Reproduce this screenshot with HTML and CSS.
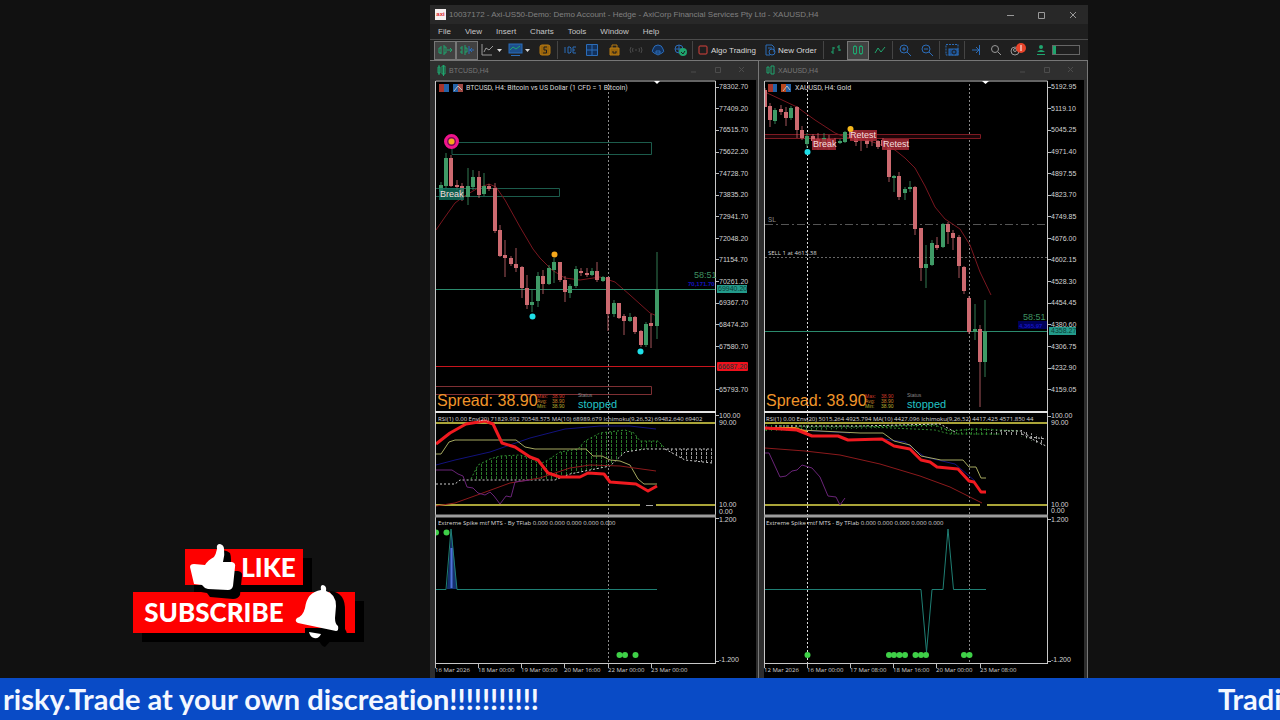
FILE: index.html
```html
<!DOCTYPE html>
<html lang="en">
<head>
<meta charset="utf-8">
<title>Live trading stream</title>
<link rel="stylesheet" href="styles.css">
</head>
<body>
<main class="stage">
  <aside class="promo">
    <button class="badge like" type="button">
      <svg class="thumb" width="52" height="56" viewBox="188 542 52 56" aria-hidden="true">
        <path class="shade" d="M199 574L206 571Q214 567 217 561L220 553Q224 548 230 553Q232 558 230 571H238Q243 572 242 576L240 595Q238 599 233 599L210 597L207 593L201 592Z"/>
        <path class="shape" d="M190 567Q190 564 194 564L205 565Q208 560 214 557Q216 554 217 549Q216 544 220 544Q224 545 224 549Q225 555 223 562L232 562Q236 563 235 567L233 586Q232 590 228 590L208 589Q204 588 202 585L194 584Z"/>
      </svg>
      <span>LIKE</span>
    </button>
    <button class="badge subscribe" type="button">
      <span>SUBSCRIBE</span>
      <svg class="bell" width="56" height="64" viewBox="290 584 56 64" aria-hidden="true">
        <path class="shade" d="M327 591Q343 592 342 612L342 629Q346 635 341 637L332 636L322 647Q318 646 316 640L302 634V628H330Z"/>
        <path class="shape" d="M318 590Q317 585 320 585Q324 586 323 591Q333 594 333 606L332 618Q332 624 335 626Q336 631 333 631L295 623Q291 621 294 618Q300 616 302 608Q304 592 318 590Z"/>
        <path class="shape" d="M306 632L318 634Q316 639 311 638Q307 637 306 632Z"/>
      </svg>
    </button>
  </aside>

  <section class="terminal">
    <header class="titlebar">
      <span class="logo">axi</span>
      <h1 class="title">10037172 - Axi-US50-Demo: Demo Account - Hedge - AxiCorp Financial Services Pty Ltd - XAUUSD,H4</h1>
      <button class="winbtn" type="button" aria-label="Minimize"><svg width="10" height="10"><path d="M1 5.5H8"/></svg></button>
      <button class="winbtn" type="button" aria-label="Maximize"><svg width="10" height="10"><path d="M1.500 2.500H7.500V8.500H1.500Z"/></svg></button>
      <button class="winbtn" type="button" aria-label="Close"><svg width="10" height="10"><path d="M2 2L8 8M8 2L2 8"/></svg></button>
    </header>
    <nav class="menubar">
      <button type="button">File</button><button type="button">View</button><button type="button">Insert</button><button type="button">Charts</button><button type="button">Tools</button><button type="button">Window</button><button type="button">Help</button>
    </nav>
    <div class="toolbar">
      <button class="tool on green" type="button" aria-label="Auto scroll"><svg width="16" height="14"><path d="M4 3V11M4 5H2V10H4M7 2V12M7 4H9V10H7M10 7H15M13 5L15 7L13 9"/></svg></button>
      <button class="tool on" type="button" aria-label="Chart shift"><svg width="16" height="14"><path class="g" d="M3 3V11M6 2V12M1 5H3M1 9H3M6 5H8V9H6"/><path class="b" d="M10 3V11M10 7H15M13 5L11 7L13 9"/></svg></button>
      <button class="tool drop grey" type="button" aria-label="Line studies"><svg width="24" height="14"><path d="M2 1V12H12M4 9L6 5L9 7L13 3"/><path class="caret" d="M17 6H22L19.500 9Z"/></svg></button>
      <button class="tool drop blue" type="button" aria-label="Templates"><svg width="24" height="14"><rect class="bf" x="1" y="1" width="13" height="9"/><path class="g" d="M2 7L5 4L8 6L12 3"/><path d="M3 12.500H12"/><path class="caret" d="M17 6H22L19.500 9Z"/></svg></button>
      <button class="tool amber" type="button" aria-label="Market"><svg width="16" height="14"><rect class="af" x="3" y="2" width="10" height="10" rx="2"/><path class="k" d="M10 4H7V7H9.500V10H6"/></svg></button>
      <i class="sep"></i>
      <button class="tool blue" type="button" aria-label="IDE"><svg width="16" height="14"><path d="M3 4V10M6 4V10H8L9 9V5L8 4ZM14 4H11V10H14M11 7H13"/></svg></button>
      <button class="tool blue" type="button" aria-label="Grid"><svg width="16" height="14"><path class="bg" d="M2.500 1.500H13.500V12.500H2.500ZM8 1V13M2 7H14"/></svg></button>
      <button class="tool amber" type="button" aria-label="Store"><svg width="16" height="14"><path class="af" d="M4 5H13V12H4Z"/><path d="M6 5V2H11V5"/><path class="k" d="M7 8V10H10V8"/></svg></button>
      <button class="tool dim" type="button" aria-label="Signals"><svg width="16" height="14"><path d="M3 4Q1 7 3 10M5 5Q4 7 5 9M13 4Q15 7 13 10M11 5Q12 7 11 9M7 7H9"/></svg></button>
      <button class="tool blue" type="button" aria-label="Cloud"><svg width="16" height="14"><path class="bg" d="M4 10Q1 9 3 6Q4 2 8 2Q12 2 13 6Q15 9 12 10L8 12Z"/><path d="M6 8H10V10H6Z"/></svg></button>
      <button class="tool" type="button" aria-label="Community"><svg width="16" height="14"><circle class="b" cx="7" cy="6" r="4"/><path class="b" d="M3 6H11M7 2V10"/><circle class="gf" cx="11" cy="9" r="4"/><path class="k" d="M9 9L11 11L13 8"/></svg></button>
      <i class="sep"></i>
      <button class="tool wide red" type="button"><svg width="12" height="14"><rect x="2" y="3" width="8" height="8" rx="1"/></svg>Algo Trading</button>
      <button class="tool wide blue" type="button"><svg width="12" height="14"><path d="M2 2H8L10 4V9M2 2V12H6M4 5H8"/><circle cx="8" cy="9" r="3"/></svg>New Order</button>
      <i class="sep"></i>
      <button class="tool green" type="button" aria-label="Bar chart"><svg width="16" height="14"><path d="M5 4V11M3 9H5M5 5H7M11 2V8M9 4H11M11 7H13"/></svg></button>
      <button class="tool on green" type="button" aria-label="Candlesticks"><svg width="16" height="14"><path d="M3.500 3.500H6.500V10.500H3.500ZM5 2V4M5 10V12M9.500 3.500H12.500V10.500H9.500ZM11 2V4M11 10V12"/></svg></button>
      <button class="tool green" type="button" aria-label="Line chart"><svg width="16" height="14"><path d="M3 10L6 5L9 9L13 4"/></svg></button>
      <i class="sep"></i>
      <button class="tool blue" type="button" aria-label="Zoom in"><svg width="16" height="14"><circle cx="7" cy="6" r="4"/><path d="M10 9L14 13M5 6H9M7 4V8"/></svg></button>
      <button class="tool blue" type="button" aria-label="Zoom out"><svg width="16" height="14"><circle cx="7" cy="6" r="4"/><path d="M10 9L14 13M5 6H9"/></svg></button>
      <i class="sep"></i>
      <button class="tool blue" type="button" aria-label="Screenshot"><svg width="16" height="14"><path class="dash" d="M2 1.500H14V12H2Z"/><rect class="bf" x="5" y="6" width="9" height="6"/><circle class="k" cx="10" cy="9" r="2"/></svg></button>
      <i class="sep"></i>
      <button class="tool slim blue" type="button" aria-label="Shift end"><svg width="12" height="14"><path d="M9.500 2V12M2 7H9M6 4L9 7L6 10"/></svg></button>
      <button class="tool slim grey" type="button" aria-label="Search"><svg width="12" height="14"><circle cx="5" cy="6" r="3.500"/><path d="M8 9L11 12"/></svg></button>
      <button class="tool bell-tool grey" type="button" aria-label="Notifications"><svg width="18" height="14"><circle cx="6" cy="8" r="4"/><circle cx="6" cy="7" r="1.500"/><circle class="alert" cx="12" cy="5" r="5"/><path class="w" d="M12 2V8"/></svg></button>
      <button class="tool green" type="button" aria-label="Account"><svg width="14" height="14"><circle class="gf" cx="7" cy="4" r="2"/><path class="gf" d="M3 9Q7 5 11 9Z"/><path d="M3 11.500H11"/></svg></button>
      <span class="meter"><i></i></span>
    </div>

    <div class="charts">
      <article class="pane">
        <header class="panehead">
          <svg class="mini" width="10" height="12"><path d="M2 3H4V9H2ZM6 2H9V10H6ZM3 1V11M7.500 1V12"/></svg>
          <h2>BTCUSD,H4</h2>
          <button type="button" aria-label="Minimize chart"><svg width="8" height="8"><path d="M1 6H6"/></svg></button>
          <button type="button" aria-label="Maximize chart"><svg width="8" height="8"><path d="M1.500 1.500H6.500V6.500H1.500Z"/></svg></button>
          <button type="button" aria-label="Close chart"><svg width="8" height="8"><path d="M1 1L6 6M6 1L1 6"/></svg></button>
        </header>
        <svg class="plot" viewBox="430 79 329 599" role="img" aria-label="BTCUSD chart">
          <defs>
            <pattern id="mesh" width="5" height="4" patternUnits="userSpaceOnUse"><path d="M1.500 0V3" stroke="#2a7a2a"/></pattern>
            <pattern id="pale" width="5" height="4" patternUnits="userSpaceOnUse"><path d="M1.500 0V3" stroke="#999"/></pattern>
            <clipPath id="pl"><rect x="436" y="82" width="279" height="581"/></clipPath>
          </defs>
          <rect x="435" y="80" width="321" height="598" fill="#000"/>
          <path class="frame" d="M435.500 663V81H715.500V663M435 663.500H716"/>
          <path class="grip" d="M654 81H660L657 84Z"/>
          <path class="vgrid" d="M608.500 84V663"/>
          <g clip-path="url(#pl)">
            <path class="zone teal" d="M452 142.500H651.500V154.500H452ZM430 188.500H559.500V196.500H430Z"/>
            <path class="zone rose" d="M430 386.500H651.500V394.500H430Z"/>
            <path class="ma" d="M436 230L445 217L455 203L463 197L478 188L489 184L496 187L505 200L520 227L533 249L540 258L552 270L565 278L580 280L600 277L615 282L630 295L650 313L657 316"/>
            <path class="priceline" d="M436 289.500H715"/>
            <path class="stopline" d="M436 366.500H715"/>
            <path class="wick up" d="M441 182V192M446 153V188M468 168V205M473 170V190M484 173V196M532 289V312M538 272V307M549 265V285M554 258V283M570 284V298M576 266V288M592 268V276M603 276V282M614 300V317M630 313V322M646 322V347M657 252V339"/>
            <path class="body up" d="M441 185V192M446 158V186M468 186V197M473 177V187M484 186V194M532 302V305M538 276V301M549 268V284M554 262V270M570 286V293M576 269V286M592 271V275M603 277V281M614 303V314M630 317V321M646 324V345M657 289V326"/>
            <path class="wick down" d="M451 155V187M457 180V190M462 183V201M479 171V198M489 184V191M495 183V233M500 225V257M505 240V277M511 256V266M516 248V272M522 266V298M527 275V309M543 270V294M560 262V282M565 276V302M581 268V276M587 268V277M597 262V282M608 277V331M619 303V319M624 314V335M635 316V334M641 330V347M651 314V348"/>
            <path class="body down" d="M451 158V186M457 185V187M462 186V198M479 177V195M489 186V189M495 188V231M500 230V256M505 255V258M511 258V264M516 264V268M522 267V288M527 288V305M543 276V284M560 262V280M565 280V292M581 271V273M587 273V275M597 271V280M608 277V314M619 303V318M624 316V321M635 317V332M641 331V345M651 323V326"/>
          </g>
          <rect x="439" y="188" width="25" height="12" fill="#12745f" opacity=".8"/>
          <text class="tag" x="440" y="197">Break</text>
          <circle cx="451.500" cy="141.500" r="6" fill="#7a0a5a" stroke="#f0148c" stroke-width="3"/>
          <circle cx="451.500" cy="141.500" r="3" fill="#f5a81c"/>
          <circle cx="554.500" cy="254.500" r="3" fill="#f5a81c"/>
          <g fill="#1fe0e8"><circle cx="532.500" cy="316.500" r="3"/><circle cx="640.500" cy="351.500" r="3"/></g>
          <g><rect x="439" y="84" width="5" height="8" fill="#a8352b"/><rect x="444" y="84" width="5" height="8" fill="#2463a8"/><rect x="453" y="84" width="5" height="8" fill="#2463a8"/><rect x="458" y="84" width="5" height="8" fill="#a14a45"/><path d="M454 91L458 86L462 90" stroke="#bbb" fill="none"/></g>
          <text class="label" x="466" y="90">BTCUSD, H4: Bitcoin vs US Dollar (1 CFD = 1 Bitcoin)</text>
          <text class="timer" x="694" y="278">58:51</text>
          <text class="ask" x="688" y="286">70,171.70</text>
          <path class="tick" d="M716 87.500h3m-3 21h3m-3 22h3m-3 22h3m-3 21h3m-3 22h3m-3 21h3m-3 22h3m-3 21h3m-3 22h3m-3 22h3m-3 21h3m-3 22h3m-3 43h3m-3 26h3m-3 103h3m-3 143h3"/>
          <g class="axis">
            <text x="719" y="89">78302.70</text><text x="719" y="111">77409.20</text><text x="719" y="132">76515.70</text><text x="719" y="154">75622.20</text><text x="719" y="176">74728.70</text><text x="719" y="197">73835.20</text><text x="719" y="219">72941.70</text><text x="719" y="241">72048.20</text><text x="719" y="262">71154.70</text><text x="719" y="284">70261.20</text><text x="719" y="305">69367.70</text><text x="719" y="327">68474.20</text><text x="719" y="349">67580.70</text><text x="719" y="392">65793.70</text>
            <text x="719" y="418">100.00</text><text x="719" y="425">90.00</text><text x="719" y="507">10.00</text><text x="719" y="514">0.00</text><text x="719" y="522">1.200</text><text x="719" y="662">-1.200</text>
          </g>
          <rect x="717" y="285" width="30" height="8" fill="#239b8b"/><text class="axis dark" x="718" y="291">69940.20</text>
          <rect x="717" y="362" width="31" height="9" rx="1" fill="#f0101c"/><text class="axis dark" x="718" y="369">66687.20</text>
          <text class="spread" x="437" y="406">Spread: 38.90</text>
          <g class="stat"><text class="r" x="537" y="398">Max:</text><text class="r" x="552" y="398">38.90</text><text class="o" x="537" y="403">Avg:</text><text class="o" x="552" y="403">38.90</text><text class="y" x="537" y="408">Min:</text><text class="y" x="552" y="408">38.90</text><text x="578" y="397">Status</text></g>
          <text class="stopped" x="578" y="408">stopped</text>
          <path class="split" d="M435 412H716"/>
          <g clip-path="url(#pl)">
            <path class="level" d="M436 423H715M436 505H640M656 505H715"/>
            <path d="M646 505.500H653" stroke="#aaa"/>
            <path d="M471 479L478 465L490 459L500 456L520 455L530 458L540 464L548 460L560 452L578 449L585 441L600 433L625 430L634 433L640 441L658 441L665 448L645 449L625 452L610 466L590 470L570 474L555 480L471 480Z" fill="url(#mesh)"/>
            <path class="cloud" d="M471 479L478 465L490 459L500 456L520 455L530 458L540 464L548 460L560 452L578 449L585 441L600 433L625 430L634 433L640 441L658 441L665 448"/>
            <path class="cloud pale" d="M436 484H455L460 480H555L570 474L590 470L610 466L625 452L645 449H712M665 449L685 460L712 463"/>
            <path d="M665 449H712V463L685 460Z" fill="url(#pale)"/>
            <path class="navy" d="M436 465L455 460L490 452L530 438L565 429L600 426L630 426L656 429"/>
            <path class="kijun" d="M436 454H441L449 442L455 440H516L525 447L535 449H586L593 456H602L610 460L620 461L630 465L638 479L644 484H657"/>
            <path class="crimson" d="M436 506L455 503L480 494L510 483L540 478L570 468L590 465L620 466L656 471"/>
            <path class="violet" d="M436 470H452L458 474L463 476L467 487L473 488L478 493L485 495L490 492L494 496L500 504L506 496L511 497L515 482L530 480"/>
            <path class="rsi" d="M436 444L450 433L466 424L485 421L493 424L502 443L515 447L530 457L538 460L548 473L560 477L580 477L588 473L604 474L610 482L636 484L648 491L657 486"/>
            <text class="label small" x="438" y="421">RSI(1) 0.00 Env(20) 71829.982 70548.575 MA(10) 68989.679 Ichimoku(9,26,52) 69482.640 69402</text>
          </g>
          <path class="split thick" d="M435 516H716"/>
          <text class="label small" x="438" y="525">Extreme Spike mtf MTS - By TFlab 0.000 0.000 0.000 0.000 0.000</text>
          <path d="M451.500 529L447 589H457Z" fill="#14306e"/>
          <path class="spike" d="M436 589.500H446L451 529L457 589.500H657"/>
          <path d="M451.500 548V588" stroke="#4f72d8" stroke-width="2"/>
          <g class="dots"><path d="M436 529.500A3 3 0 0 1 436 535.500Z"/><circle cx="446.500" cy="532.500" r="3"/><circle cx="619.500" cy="655" r="3"/><circle cx="625" cy="655" r="3"/><circle cx="635.500" cy="655" r="3"/></g>
          <path class="tick" d="M435.500 664v4m43-4v4m43-4v4m43-4v4m44-4v4m43-4v4"/>
          <g class="axis dates"><text x="435" y="672">16 Mar 2026</text><text x="478" y="672">18 Mar 00:00</text><text x="521" y="672">19 Mar 00:00</text><text x="564" y="672">20 Mar 16:00</text><text x="608" y="672">22 Mar 00:00</text><text x="651" y="672">23 Mar 00:00</text></g>
        </svg>
      </article>

      <article class="pane">
        <header class="panehead">
          <svg class="mini" width="10" height="12"><path d="M2 3H4V9H2ZM6 2H9V10H6Z"/></svg>
          <h2>XAUUSD,H4</h2>
          <button type="button" aria-label="Minimize chart"><svg width="8" height="8"><path d="M1 6H6"/></svg></button>
          <button type="button" aria-label="Maximize chart"><svg width="8" height="8"><path d="M1.500 1.500H6.500V6.500H1.500Z"/></svg></button>
          <button type="button" aria-label="Close chart"><svg width="8" height="8"><path d="M1 1L6 6M6 1L1 6"/></svg></button>
        </header>
        <svg class="plot" viewBox="759 79 329 599" role="img" aria-label="XAUUSD chart">
          <defs><clipPath id="pr"><rect x="765" y="82" width="282" height="581"/></clipPath></defs>
          <rect x="764" y="80" width="320" height="598" fill="#000"/>
          <path class="frame" d="M764.500 663V81H1047.500V663M764 663.500H1048"/>
          <path class="grip" d="M982 81H989L985.500 84Z"/>
          <path class="vgrid" d="M969.500 84V663"/>
          <path class="vgrid bright" d="M807.500 82V663"/>
          <g clip-path="url(#pr)">
            <path class="zone crims" d="M760 134.500H980.500V138.500H760Z"/>
            <path class="hdash" d="M765 224.500H1047"/>
            <path class="hdot" d="M765 257.500H1047"/>
            <path class="ma" d="M765 92L780 99L797 107L815 120L835 133L845 137L870 141L895 150L905 158L915 168L925 186L935 207L945 219L960 229L970 245L980 272L991 295"/>
            <path class="priceline" d="M765 331.500H1047"/>
            <path class="wick up" d="M775 108V124M791 106V120M807 133V148M824 133V149M840 139V144M845 131V143M894 175V192M905 187V200M910 181V192M926 245V288M932 240V266M943 223V248M975 304V340M985 300V377"/>
            <path class="body up" d="M775 110V121M791 108V118M807 136V144M824 138V145M840 141V143M845 132V142M894 176V178M905 189V193M910 187V189M926 264V268M932 243V265M943 224V247M975 329V332M985 331V362"/>
            <path class="wick down" d="M765 88V107M770 103V127M781 105V115M786 107V126M797 106V138M802 126V140M813 134V146M818 133V150M829 135V150M835 138V147M851 128V140M856 130V146M861 138V151M867 138V148M872 139V146M878 140V149M883 138V149M889 145V182M899 172V200M915 186V235M921 228V281M937 237V250M948 222V244M953 230V250M959 235V278M964 266V294M969 296V334M980 325V407"/>
            <path class="body down" d="M765 90V107M770 106V120M781 109V112M786 112V118M797 107V130M802 130V138M813 136V141M818 139V144M829 139V146M851 130V138M856 136V142M867 140V144M878 141V147M883 140V146M889 148V177M899 176V197M915 187V229M921 228V268M937 245V248M948 224V232M953 233V238M959 237V266M964 267V291M969 298V332M980 329V362"/>
          </g>
          <g fill="#a82a36" opacity=".85"><rect x="812" y="139" width="24" height="11"/><rect x="850" y="130" width="27" height="11"/><rect x="882" y="139" width="27" height="11"/></g>
          <text class="tag" x="813" y="147">Break</text><text class="tag" x="850" y="138">Retest</text><text class="tag" x="883" y="147">Retest</text>
          <circle cx="850.500" cy="129" r="3" fill="#f5b81c"/>
          <circle cx="807.500" cy="152" r="3" fill="#1fe0e8"/>
          <rect x="768" y="84" width="5" height="8" fill="#a8352b"/><rect x="773" y="84" width="4" height="8" fill="#2463a8"/><rect x="781" y="84" width="5" height="8" fill="#b8481f"/><rect x="786" y="84" width="5" height="8" fill="#2463a8"/><path d="M783 91L787 86L790 90" stroke="#bbb" fill="none"/>
          <text class="label" x="795" y="90">XAUUSD, H4: Gold</text>
          <text class="label dim" x="768" y="222">SL</text>
          <text class="label small" x="768" y="255">SELL 1 at 4613.38</text>
          <text class="timer" x="1023" y="320">58:51</text>
          <rect x="1018" y="321" width="29" height="8" fill="#000058"/><text class="ask" x="1019" y="328">4,365.97</text>
          <path class="tick" d="M1048 87.500h3m-3 21h3m-3 22h3m-3 22h3m-3 21h3m-3 22h3m-3 21h3m-3 22h3m-3 21h3m-3 22h3m-3 22h3m-3 21h3m-3 22h3m-3 22h3m-3 21h3m-3 27h3m-3 103h3m-3 142h3"/>
          <g class="axis">
            <text x="1051" y="89">5192.95</text><text x="1051" y="111">5119.10</text><text x="1051" y="132">5045.25</text><text x="1051" y="154">4971.40</text><text x="1051" y="176">4897.55</text><text x="1051" y="197">4823.70</text><text x="1051" y="219">4749.85</text><text x="1051" y="241">4676.00</text><text x="1051" y="262">4602.15</text><text x="1051" y="284">4528.30</text><text x="1051" y="305">4454.45</text><text x="1051" y="327">4380.60</text><text x="1051" y="349">4306.75</text><text x="1051" y="370">4232.90</text><text x="1051" y="392">4159.05</text>
            <text x="1051" y="418">100.00</text><text x="1051" y="425">90.00</text><text x="1051" y="507">10.00</text><text x="1051" y="513">0.00</text><text x="1051" y="522">1.200</text><text x="1051" y="662">-1.200</text>
          </g>
          <rect x="1049" y="327" width="27" height="8" fill="#239b8b"/><text class="axis dark" x="1051" y="333">4358.27</text>
          <text class="spread" x="766" y="406">Spread: 38.90</text>
          <g class="stat"><text class="r" x="865" y="398">Max:</text><text class="r" x="881" y="398">38.90</text><text class="o" x="865" y="403">Avg:</text><text class="o" x="881" y="403">38.90</text><text class="y" x="865" y="408">Min:</text><text class="y" x="881" y="408">38.90</text><text x="907" y="397">Status</text></g>
          <text class="stopped" x="907" y="408">stopped</text>
          <path class="split" d="M764 412H1048"/>
          <g clip-path="url(#pr)">
            <path class="level" d="M765 423H1047M765 505H980M987 505H1047"/>
            <path d="M765 425H935L950 430L975 428L1020 430L1030 436L1046 440V446L1020 436L950 434L935 427L765 431Z" fill="url(#mesh)"/>
            <path d="M990 430H1022L1046 438V447L1022 436L990 434Z" fill="url(#pale)"/>
            <path class="cloud" d="M765 430L800 427L860 427L935 425L950 431L975 429L1020 431M870 427L935 430L950 434L1000 434"/>
            <path class="cloud pale" d="M775 426L860 426L940 424L955 432M1000 431H1022L1030 437L1046 439M1022 434L1046 446"/>
            <path class="navy" d="M765 427L815 431L850 433M884 439L905 442L915 450L925 457L955 464L975 481"/>
            <path class="kijun" d="M765 428L800 430L860 433H883L894 441L910 445L921 456L941 460H963L969 467H976L981 478H986"/>
            <path class="crimson" d="M765 448L805 451L840 455L880 464L920 476L950 487L982 503"/>
            <path class="violet" d="M765 453H769L780 477L786 476L792 471L797 470L802 465L812 468L820 477L828 496L836 497L840 505L845 498"/>
            <path class="orange" d="M765 428H795L807 432"/>
            <path class="rsi" d="M765 428L797 430L812 436L838 436L848 440L882 439L894 446L910 449L921 460L930 462L937 467L958 469L969 481L974 482L981 492L986 492"/>
            <text class="label small" x="766" y="421">RSI(1) 0.00 Env(20) 5015.264 4925.794 MA(10) 4427.096 Ichimoku(9,26,52) 4417.425 4571.850 44</text>
          </g>
          <path class="split thick" d="M764 516H1048"/>
          <text class="label small" x="766" y="525">Extreme Spike mtf MTS - By TFlab 0.000 0.000 0.000 0.000 0.000</text>
          <path class="spike" d="M765 589.500H921L926.500 652L932 589.500H943L948 529L953.500 589.500H986"/>
          <g class="dots"><circle cx="807.500" cy="655" r="3"/><circle cx="889" cy="655" r="3"/><circle cx="894" cy="655" r="3"/><circle cx="899.500" cy="655" r="3"/><circle cx="905" cy="655" r="3"/><circle cx="915.500" cy="655" r="3"/><circle cx="921" cy="655" r="3"/><circle cx="926" cy="655" r="3"/><circle cx="964" cy="655" r="3"/><circle cx="969.500" cy="655" r="3"/></g>
          <path class="tick" d="M764.500 664v4m43-4v4m43-4v4m43-4v4m43-4v4m44-4v4"/>
          <g class="axis dates"><text x="764" y="672">12 Mar 2026</text><text x="807" y="672">16 Mar 00:00</text><text x="850" y="672">17 Mar 08:00</text><text x="893" y="672">18 Mar 16:00</text><text x="936" y="672">20 Mar 00:00</text><text x="980" y="672">23 Mar 08:00</text></g>
        </svg>
      </article>
    </div>
  </section>
</main>
<footer class="ticker"><p>risky.Trade at your own discreation!!!!!!!!!!!</p><p class="next">Trading</p></footer>
</body>
</html>
```
FILE: styles.css
```css
* { box-sizing: border-box; }
body {
  margin: 0;
  min-height: 100vh;
  display: flex;
  flex-direction: column;
  background: #111;
  color: #ccc;
  font-family: "Liberation Sans", Arial, sans-serif;
  overflow-x: hidden;
}
h1, h2, p { margin: 0; font-weight: 400; }
button { border: 0; padding: 0; background: none; color: inherit; font: inherit; }
svg { display: block; }

.stage {
  flex: 1;
  display: grid;
  grid-template-columns: 430fr 658fr 192fr;
  padding-top: 5px;
}

/* call-to-action badges */
.promo {
  display: flex;
  flex-direction: column;
  align-items: flex-start;
  justify-content: flex-end;
  gap: 7px;
  padding: 0 0 45px 31%;
}
.badge {
  position: relative;
  display: flex;
  align-items: center;
  background: #fe0000;
  color: #fff;
  font-family: Lato, sans-serif;
  font-weight: 900;
  box-shadow: 9px 9px 0 #000;
}
.like { height: 36px; margin-left: 52px; padding: 0 7px 0 56px; font-size: 26px; }
.subscribe { height: 41px; padding: 0 71px 2px 11px; font-size: 26px; }
.thumb { position: absolute; left: 3px; top: -7px; z-index: 1; overflow: visible; }
.bell { position: absolute; right: 6px; top: -8px; }
.shade { fill: #000; }
.shape { fill: #fff; }

/* terminal window */
.terminal {
  display: flex;
  flex-direction: column;
  min-width: 0;
  background: #1f1f1f;
}
.titlebar { display: flex; align-items: center; height: 19px; padding: 0 0 0 5px; background: #282828; }
.logo { width: 11px; height: 11px; background: #f6f0f0; color: #d8232a; font-size: 6px; line-height: 10px; text-align: center; font-weight: 700; }
.title { flex: 1; margin-left: 3px; font-size: 8px; color: #808080; white-space: nowrap; }
.winbtn { display: flex; width: 31px; justify-content: center; }
.winbtn svg { fill: none; stroke: #999; }
.menubar { display: flex; align-items: center; gap: 14px; height: 15px; padding-left: 8px; font-size: 8px; color: #c6c6c6; }
.toolbar { display: flex; align-items: center; height: 22px; padding-left: 4px; border-top: 1px solid #4c4c4c; border-bottom: 1px solid #777; font-size: 8px; color: #d8d8d8; }
.tool { display: flex; flex: 0 0 22px; align-items: center; justify-content: center; height: 19px; }
.tool svg { fill: none; stroke: currentColor; flex: none; }
.on { background: #414141; border: 1px solid #777; }
.drop { flex-basis: 28px; }
.slim { flex-basis: 20px; }
.bell-tool { flex-basis: 24px; }
.wide { flex: 0 0 auto; padding: 0 5px 0 3px; gap: 2px; white-space: nowrap; }
.red svg { stroke: #d8433c; }
.green { color: #1fa56e; }
.blue svg { stroke: #2b6cb8; }
.amber { color: #b87a10; }
.grey { color: #999; }
.dim { color: #4a4a4a; }
.tool .g { stroke: #1fa56e; }
.tool .b { stroke: #2b6cb8; }
.tool .bg { fill: #12305a; }
.tool .k { stroke: #1c1c1c; }
.tool .w { stroke: #fff; }
.tool .gf { fill: #1fa56e; stroke: none; }
.tool .bf { fill: #1d4f8c; }
.tool .af { fill: #98640c; }
.tool .alert { fill: #e8442a; stroke: none; }
.tool .caret { fill: #ddd; stroke: none; }
.tool .dash { stroke-dasharray: 2 1; }
.sep { flex: 0 0 1px; height: 18px; margin: 0 1px; background: #444; }
.meter { flex: 1; max-width: 28px; height: 10px; border: 1px solid #666; }
.meter i { display: block; width: 3px; height: 8px; background: #1fa56e; }

.charts { flex: 1; display: grid; grid-template-columns: 1fr 1fr; }
.pane { min-width: 0; background: #2d2d2d; box-shadow: inset -1px 0 0 #777; }
.panehead { display: flex; align-items: center; height: 18px; margin-right: 1px; padding: 0 4px 0 6px; background: #2f2f2f; }
.panehead h2 { flex: 1; margin-left: 3px; font-size: 7px; color: #777; }
.panehead button { width: 24px; }
.panehead button svg { margin: 0 auto; fill: none; stroke: #4c4c4c; }
.mini { fill: none; stroke: #1fa56e; }

/* plots */
.plot { width: 100%; height: auto; overflow: hidden; }
.frame { fill: none; stroke: #c8c8c8; }
.grip { fill: #fff; }
.vgrid { stroke: #8a8a8a; stroke-dasharray: 2 2; }
.bright { stroke: #ddd; }
.hdash { stroke: #555; stroke-dasharray: 8 3 2 3; }
.hdot { stroke: #666; stroke-dasharray: 2 2; }
.zone { fill: none; }
.teal { stroke: #1c5c4c; }
.rose { stroke: #7e2f33; }
.crims { stroke: #7e1a22; fill: #1c0508; }
.ma { fill: none; stroke: #79161f; }
.priceline { stroke: #2b8a6d; }
.stopline { stroke: #c8141c; }
.wick { fill: none; stroke-width: 1; opacity: .8; }
.body { fill: none; stroke-width: 4; }
.up { stroke: #3f9a66; }
.down { stroke: #cd6a70; }
.tag { font-size: 9px; fill: #f4dede; }
.label { font-family: Roboto, sans-serif; font-size: 7px; fill: #d8d8d8; }
.small { font-family: "Open Sans", sans-serif; font-size: 6px; }
.label.dim { fill: #888; }
.axis { font-size: 7px; fill: #d4d4d4; }
.axis.dark { fill: #0b3a34; }
.dates { font-family: "Open Sans", sans-serif; font-size: 6px; }
.tick { fill: none; stroke: #bbb; }
.timer { font-size: 9px; fill: #3f9160; }
.ask { font-size: 6px; fill: #1414c0; font-weight: 700; }
.spread { font-size: 16px; fill: #f0952a; }
.stopped { font-size: 11px; fill: #22c3c6; }
.stat { font-size: 5px; fill: #888; }
.r { fill: #d03a2a; }
.o { fill: #c8802a; }
.y { fill: #b8b030; }
.split { stroke: #e4e4e4; stroke-width: 2; }
.thick { stroke: #9c9c9c; stroke-width: 3; }
.level { stroke: #aaa438; stroke-width: 2; }
.cloud { fill: none; stroke: #2f8a2f; stroke-dasharray: 2 2; }
.cloud.pale { stroke: #ccc; }
.navy { fill: none; stroke: #12127c; }
.kijun { fill: none; stroke: #a5a860; }
.crimson { fill: none; stroke: #8c1a1c; }
.violet { fill: none; stroke: #6a2478; }
.orange { fill: none; stroke: #f08a1c; stroke-width: 2; }
.rsi { fill: none; stroke: #f01a20; stroke-width: 3; stroke-linejoin: round; }
.spike { fill: none; stroke: #1f7f74; }
.dots { fill: #3fd048; }

/* scrolling caption */
.ticker {
  display: flex;
  align-items: center;
  height: 42px;
  padding-left: 3px;
  overflow: hidden;
  background: #094bc6;
  color: #f4f8ff;
  font-family: Lato, sans-serif;
  font-size: 29px;
  font-variant-ligatures: none;
  line-height: 42px;
  white-space: nowrap;
}
.ticker p { font-weight: 700; }
.ticker .next { width: 62px; margin-left: auto; }
```
